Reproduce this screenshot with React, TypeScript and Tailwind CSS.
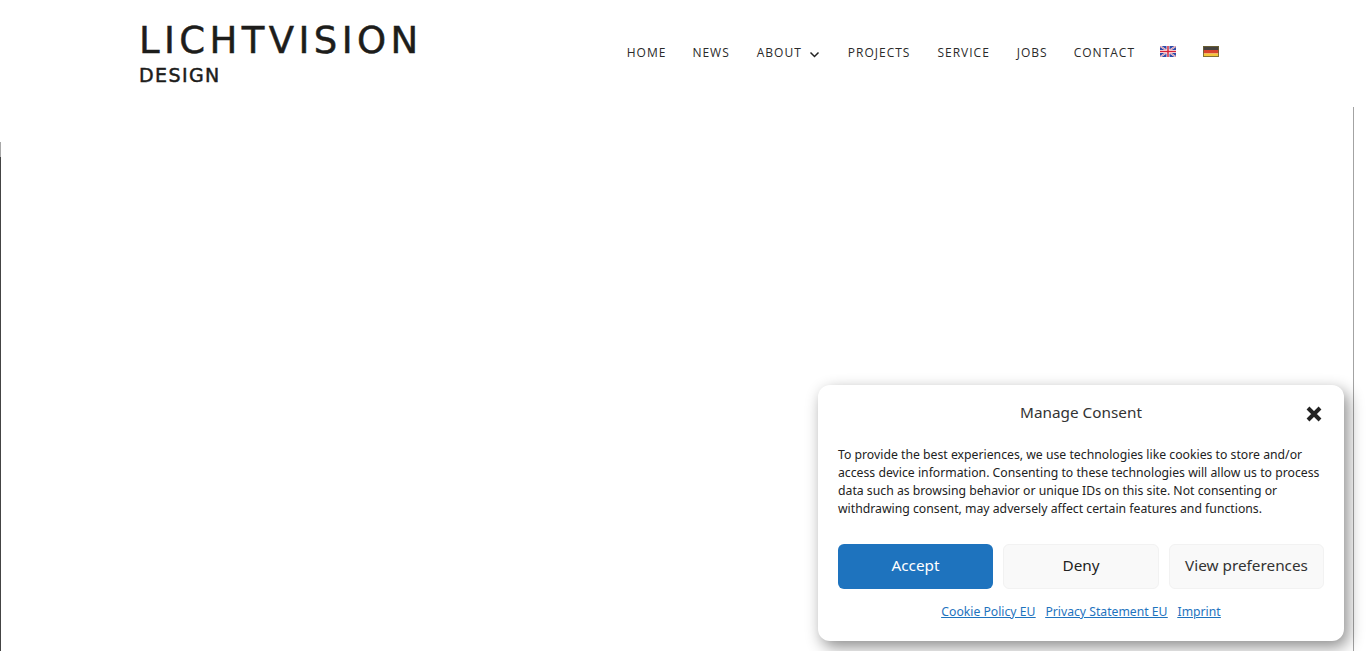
import React from "react";

const nav = ["HOME", "NEWS", "ABOUT", "PROJECTS", "SERVICE", "JOBS", "CONTACT"];
const navGap: Record<string, string> = {
  HOME: "mr-[26px]",
  NEWS: "mr-[27px]",
  ABOUT: "mr-[28px]",
  PROJECTS: "mr-[27px]",
  SERVICE: "mr-[27px]",
  JOBS: "mr-[26px]",
  CONTACT: "mr-[25px]",
};

function UkFlag() {
  return (
    <svg width="16" height="11" viewBox="0 0 16 11">
      <rect width="16" height="11" fill="#2f4aa8" />
      <path d="M0 0L16 11M16 0L0 11" stroke="#f6f0f2" strokeWidth="1.8" />
      <path d="M0 0L16 11M16 0L0 11" stroke="#d0405a" strokeWidth="0.6" />
      <path d="M8 0V11M0 5.5H16" stroke="#ffffff" strokeWidth="3" />
      <path d="M8 0V11M0 5.5H16" stroke="#d5243a" strokeWidth="1.5" />
    </svg>
  );
}

function DeFlag() {
  return (
    <svg width="16" height="11" viewBox="0 0 16 11">
      <rect width="16" height="4" fill="#45423f" />
      <rect y="4" width="16" height="3.5" fill="#d9442c" />
      <rect y="7.5" width="16" height="3.5" fill="#f4c63a" />
      <rect x="0.5" y="0.5" width="15" height="10" fill="none" stroke="#6e6232" strokeOpacity="0.85" />
    </svg>
  );
}

export default function App() {
  return (
    <div className="relative h-[651px] w-[1366px] overflow-hidden bg-white font-['Open_Sans',sans-serif]">
      <header className="flex h-[107px] items-start pl-[139px] pr-[147px]">
        <div className="flex w-[288px] flex-col pt-[16px] font-['DejaVu_Sans',sans-serif] text-[#1d1d1b] [-webkit-text-stroke:0.5px_#1d1d1b]">
          <span className="text-[37px] leading-[50px] tracking-[4.4px] whitespace-nowrap">LICHTVISION</span>
          <span className="mt-[-1px] text-[19px] leading-[20px] tracking-[1.4px]">DESIGN</span>
        </div>
        <nav className="ml-auto flex items-center pt-[44px] text-[12px] leading-[18px] tracking-[1px] text-[#2a2a2a]">
          {nav.map((n) => (
            <span key={n} className={`flex items-center whitespace-nowrap ${navGap[n]}`}>
              {n}
              {n === "ABOUT" && (
                <svg className="ml-[7px] mt-[3px]" width="11" height="7" viewBox="0 0 11 7" fill="none">
                  <path d="M1.5 1.5L5.5 5.5L9.5 1.5" stroke="#222" strokeWidth="1.5" />
                </svg>
              )}
            </span>
          ))}
          <span className="mb-[3px] flex"><UkFlag /></span>
          <span className="mb-[3px] ml-[27px] flex"><DeFlag /></span>
        </nav>
      </header>
      <main className="mr-[12px] h-[544px] border-r border-[#a3a3a3] pt-[35px]">
        <div className="h-[15px] w-px bg-[#a8a8a8]" />
        <div className="h-[494px] w-px bg-[#444]" />
      </main>

      <aside className="absolute left-[818px] top-[385px] flex h-[256px] w-[526px] flex-col rounded-[12px] bg-white px-5 font-['Noto_Sans',sans-serif] text-[#222] shadow-[4px_6px_16px_rgba(0,0,0,0.45)]">
        <div className="relative flex h-[55px] items-center justify-center text-[15.3px] text-[#333]">
          <span>Manage Consent</span>
          <svg className="absolute right-[1px] top-[20px]" width="18" height="18" viewBox="0 0 18 18">
            <path d="M3 3L15 15M15 3L3 15" stroke="#222" strokeWidth="4" />
          </svg>
        </div>
        <p className="mt-[6px] text-[12.24px] leading-[18px]">
          To provide the best experiences, we use technologies like cookies to store and/or access device information. Consenting to these technologies will allow us to process data such as browsing behavior or unique IDs on this site. Not consenting or withdrawing consent, may adversely affect certain features and functions.
        </p>
        <div className="mt-[26px] flex gap-[10px] text-[15.3px]">
          <button className="h-[45px] w-[155px] rounded-[6px] bg-[#1e73be] pb-[2px] text-white">Accept</button>
          <button className="h-[45px] w-[156px] rounded-[6px] border border-[#f2f2f2] bg-[#f9f9f9] pb-[2px]">Deny</button>
          <button className="h-[45px] w-[155px] rounded-[6px] border border-[#f2f2f2] bg-[#f9f9f9] pb-[2px] text-[#333]">View preferences</button>
        </div>
        <div className="mt-[14px] flex justify-center gap-[10px] text-[12.2px] leading-[18px] text-[#1e73be] underline">
          <a>Cookie Policy EU</a>
          <a>Privacy Statement EU</a>
          <a>Imprint</a>
        </div>
      </aside>
    </div>
  );
}
